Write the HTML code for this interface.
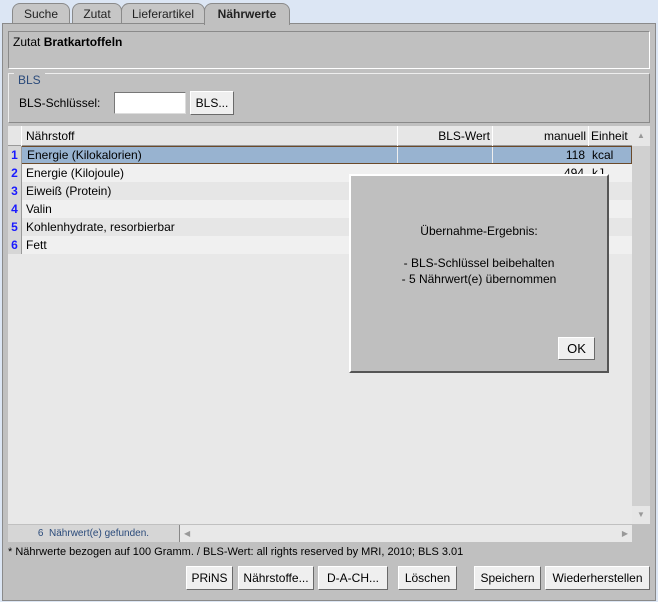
<!DOCTYPE html>
<html><head><meta charset="utf-8"><style>
*{box-sizing:border-box;margin:0;padding:0}
body{width:658px;height:602px;background:#dce6f4;font-family:"Liberation Sans",sans-serif;font-size:12px;color:#000;position:relative;overflow:hidden}
.a{position:absolute}
.tab{position:absolute;top:3px;height:21px;background:#c6c6c6;border:1px solid #8a8a8a;border-bottom:none;border-radius:8px 8px 0 0;text-align:center;line-height:20px;font-size:12px;color:#222}
.btn{position:absolute;height:24px;background:#efefef;border:1px solid #fff;border-right-color:#6a6a6a;border-bottom-color:#6a6a6a;text-align:center;line-height:22px;font-size:12px}
.row{position:absolute;left:8px;width:624px;height:18px;line-height:18px}
.num{position:absolute;left:0;width:14px;height:18px;background:#d6d6d6;border-right:1px solid #999;color:#1a1aff;font-weight:bold;text-align:center}
.txt{position:absolute;left:18px}
.val{position:absolute;right:48px;text-align:right}
.unit{position:absolute;left:584px}
</style></head><body>
<div class="tab" style="left:12px;width:58px">Suche</div>
<div class="tab" style="left:72px;width:50px">Zutat</div>
<div class="tab" style="left:121px;width:84px">Lieferartikel</div>
<div class="tab" style="left:204px;width:86px;font-weight:bold;background:#c0c0c0;z-index:2;height:22px">Nährwerte</div>
<div class="a" style="left:2px;top:23px;width:654px;height:578px;background:#c0c0c0;border:1px solid #8a8a8a"></div>
<div class="a" style="left:8px;top:31px;width:642px;height:38px;border:1px solid #8a8a8a;border-right-color:#fff;border-bottom-color:#fff"></div>
<div class="a" style="left:13px;top:35px">Zutat <b>Bratkartoffeln</b></div>
<div class="a" style="left:8px;top:73px;width:642px;height:50px;border:1px solid #8a8a8a;border-top-color:#eee;border-left-color:#eee"></div>
<div class="a" style="left:14px;top:73px;color:#2a4a7a;background:#c0c0c0;padding:0 4px">BLS</div>
<div class="a" style="left:19px;top:96px">BLS-Schlüssel:</div>
<div class="a" style="left:114px;top:92px;width:72px;height:22px;background:#fff;border:1px solid #777;border-right-color:#ddd;border-bottom-color:#ddd"></div>
<div class="btn" style="left:190px;top:91px;width:44px">BLS...</div>
<div class="a" style="left:8px;top:126px;width:624px;height:398px;background:#e8e8e8"></div>
<div class="a" style="left:8px;top:126px;width:624px;height:20px;background:#e6e6e6;border-bottom:1px solid #999"></div>
<div class="a" style="left:8px;top:126px;width:14px;height:20px;border-right:1px solid #fff"></div>
<div class="a" style="left:26px;top:129px">Nährstoff</div>
<div class="a" style="left:397px;top:126px;width:96px;height:20px;border-left:1px solid #fff;border-right:1px solid #fff;text-align:right;padding:3px 2px 0 0">BLS-Wert</div>
<div class="a" style="left:493px;top:126px;width:96px;height:20px;border-right:1px solid #fff;text-align:right;padding:3px 2px 0 0">manuell</div>
<div class="a" style="left:591px;top:129px">Einheit</div>
<div class="row" style="top:146px;background:#98b3d0;border:1px solid #6b4a2a"><div class="num" style="top:-1px;left:-1px">1</div><span class="txt" style="top:-1px">Energie (Kilokalorien)</span>
<div class="a" style="left:388px;top:0;width:96px;height:16px;border-left:1px solid #eee;border-right:1px solid #eee"></div>
<div class="val" style="top:-1px;right:46px">118</div><div class="unit" style="top:-1px;left:583px">kcal</div></div>
<div class="row" style="top:164px;background:#f0f0f0"><div class="num">2</div><span class="txt">Energie (Kilojoule)</span><div class="val">494</div><div class="unit">kJ</div></div>
<div class="row" style="top:182px;background:#e6e6e6"><div class="num">3</div><span class="txt">Eiweiß (Protein)</span></div>
<div class="row" style="top:200px;background:#f0f0f0"><div class="num">4</div><span class="txt">Valin</span></div>
<div class="row" style="top:218px;background:#e6e6e6"><div class="num">5</div><span class="txt">Kohlenhydrate, resorbierbar</span></div>
<div class="row" style="top:236px;background:#f0f0f0"><div class="num">6</div><span class="txt">Fett</span></div>
<div class="a" style="left:632px;top:126px;width:18px;height:398px;background:#d0d0d0"></div>
<div class="a" style="left:632px;top:126px;width:18px;height:20px;background:#e6e6e6;color:#999;font-size:8px;text-align:center;line-height:20px">▲</div>
<div class="a" style="left:632px;top:506px;width:18px;height:18px;background:#e6e6e6;color:#999;font-size:8px;text-align:center;line-height:18px">▼</div>
<div class="a" style="left:8px;top:525px;width:172px;height:17px;background:#d6d6d6;border-right:1px solid #888;color:#2a4a7a;font-size:10px;text-align:center;line-height:17px">6&nbsp; Nährwert(e) gefunden.</div>
<div class="a" style="left:180px;top:525px;width:452px;height:17px;background:#e8e8e8;color:#999;font-size:8px;line-height:17px;padding-left:4px">◀<span style="position:absolute;right:4px">▶</span></div>
<div class="a" style="left:8px;top:546px;font-size:11px">* Nährwerte bezogen auf 100 Gramm. / BLS-Wert: all rights reserved by MRI, 2010; BLS 3.01</div>
<div class="btn" style="left:186px;top:566px;width:47px">PRiNS</div>
<div class="btn" style="left:238px;top:566px;width:76px">Nährstoffe...</div>
<div class="btn" style="left:318px;top:566px;width:70px">D-A-CH...</div>
<div class="btn" style="left:398px;top:566px;width:59px">Löschen</div>
<div class="btn" style="left:474px;top:566px;width:67px">Speichern</div>
<div class="btn" style="left:545px;top:566px;width:105px">Wiederherstellen</div>
<div class="a" style="left:349px;top:174px;width:260px;height:199px;background:#bfbfbf;border:2px solid #fff;border-right-color:#555;border-bottom-color:#555;text-align:center">
<div style="position:absolute;top:48px;width:100%">Übernahme-Ergebnis:</div>
<div style="position:absolute;top:80px;width:100%">- BLS-Schlüssel beibehalten</div>
<div style="position:absolute;top:96px;width:100%">- 5 Nährwert(e) übernommen</div>
</div>
<div class="btn" style="left:558px;top:337px;width:37px;height:23px;font-size:13px">OK</div>
</body></html>
